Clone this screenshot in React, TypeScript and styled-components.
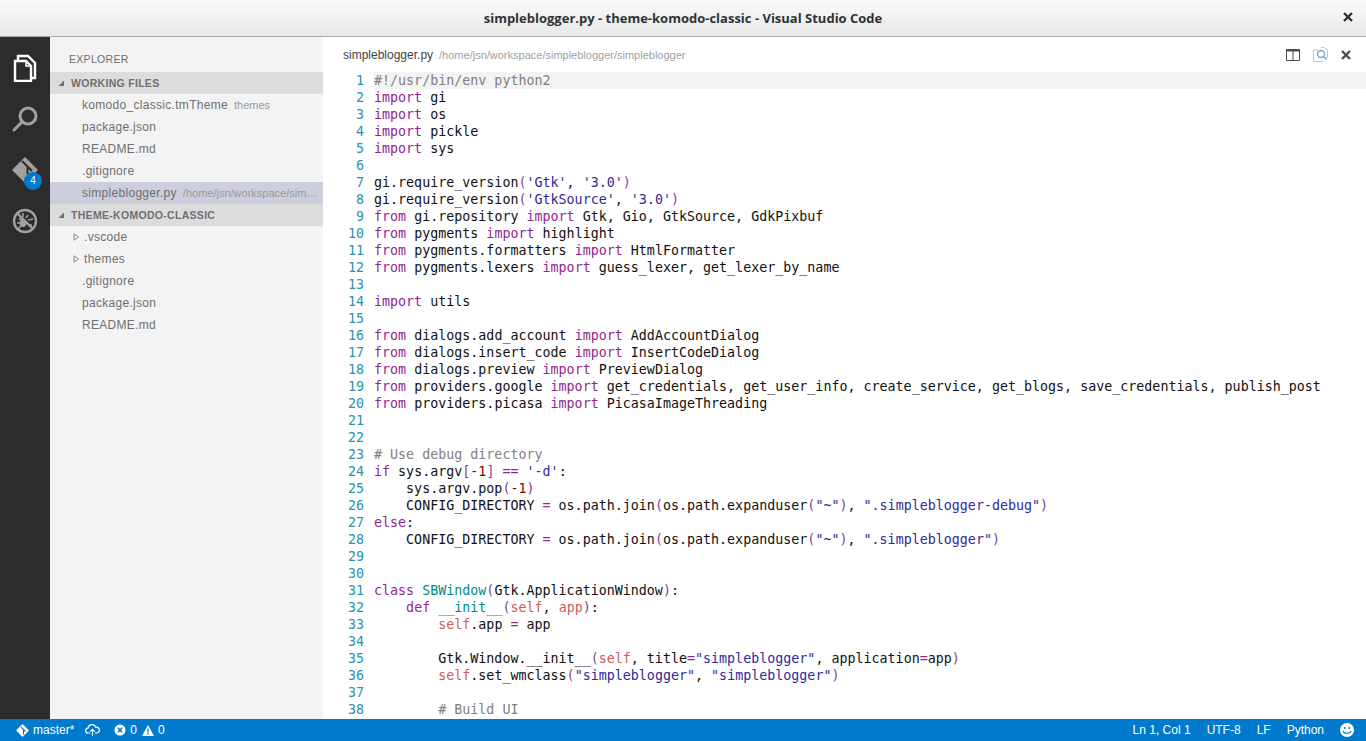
import React from 'react'
import styled, { createGlobalStyle } from 'styled-components'

const GlobalStyle = createGlobalStyle`
    html, body {
        margin: 0;
        padding: 0;
        height: 100%;
        overflow: hidden;
    }
    #root {
        height: 100%;
    }
`

const UI_FONT = `'Liberation Sans', Arial, sans-serif`

const Window = styled.div`
    display: flex;
    flex-direction: column;
    width: 1366px;
    height: 741px;
    background: #fff;
    font-family: ${UI_FONT};
`

const TitleBar = styled.div`
    position: relative;
    display: flex;
    align-items: center;
    justify-content: center;
    flex: 0 0 36px;
    border-bottom: 1px solid #a9a9a9;
    background: linear-gradient(#fafafa, #e8e8e8);
    color: #2e3436;
    font-family: 'Open Sans', sans-serif;
    font-weight: 700;
    font-size: 13px;
`

const WindowClose = styled.span`
    position: absolute;
    right: 13px;
    top: 12px;
    display: flex;
`

const Body = styled.div`
    display: flex;
    flex: 1;
    min-height: 0;
`

const ActivityBar = styled.nav`
    display: flex;
    flex-direction: column;
    align-items: center;
    flex: 0 0 50px;
    background: #2c2c2c;
    padding-top: 5px;
    box-sizing: border-box;
`

const ActivityItem = styled.div`
    position: relative;
    display: flex;
    align-items: center;
    justify-content: center;
    width: 50px;
    height: 51px;
`

const Badge = styled.span`
    position: absolute;
    left: 24px;
    top: 28px;
    width: 18px;
    height: 18px;
    border-radius: 50%;
    background: #007acc;
    color: #fff;
    font-size: 10px;
    line-height: 18px;
    text-align: center;
`

const SideBar = styled.aside`
    flex: 0 0 273px;
    background: #f3f3f3;
    color: #6f6f6f;
    font-size: 12px;
    letter-spacing: 0.3px;
    overflow: hidden;
`

const SideTitle = styled.div`
    height: 35px;
    line-height: 44px;
    padding-left: 19px;
    font-size: 10.5px;
`

const SectionHeader = styled.div`
    display: flex;
    align-items: center;
    height: 22px;
    background: #dcdcdc;
    font-size: 10.5px;
    font-weight: 700;
    padding-left: 7px;
    gap: 6px;
`

const Row = styled.div<{ $selected?: boolean }>`
    display: flex;
    align-items: center;
    height: 22px;
    padding-left: 32px;
    white-space: nowrap;
    background: ${p => (p.$selected ? '#cccedb' : 'transparent')};
`

const TreeRow = styled(Row)`
    padding-left: 22px;
    gap: 4px;
`

const Hint = styled.span`
    margin-left: 6px;
    font-size: 11px;
    color: #9a9a9a;
    letter-spacing: 0;
    overflow: hidden;
    text-overflow: ellipsis;
    padding-right: 5px;
`

const Editor = styled.main`
    display: flex;
    flex-direction: column;
    flex: 1;
    min-width: 0;
`

const EditorTitle = styled.div`
    display: flex;
    align-items: center;
    flex: 0 0 35px;
    padding-left: 20px;
    font-size: 12px;
    color: #444;
`

const EditorPath = styled.span`
    margin-left: 6px;
    font-size: 11px;
    color: #a0a0a0;
`

const EditorActions = styled.div`
    display: flex;
    align-items: center;
    gap: 13px;
    margin-left: auto;
    padding-right: 15px;
`

const Code = styled.div`
    flex: 1;
    overflow: hidden;
    font-family: 'DejaVu Sans Mono', monospace;
    font-size: 13.33px;
    line-height: 17px;
`

const CodeLine = styled.div`
    display: flex;
    height: 17px;
`

const LineNumber = styled.span`
    flex: 0 0 41px;
    text-align: right;
    color: #2b91af;
`

const LineText = styled.span<{ $current?: boolean }>`
    flex: 1;
    margin-left: 10px;
    white-space: pre;
    color: #111;
    background: ${p => (p.$current ? '#f3f3f3' : 'transparent')};
`

const TOKEN_COLOURS: Record<string, string> = {
    k: '#91278f',
    c: '#808080',
    s: '#2f2a9c',
    p: '#7f3f98',
    n: '#8b0000',
    t: '#008b8b',
    a: '#c8605c',
    o: '#91278f',
}

const Token = styled.span<{ $kind: string }>`
    color: ${p => TOKEN_COLOURS[p.$kind]};
`

const StatusBar = styled.footer`
    display: flex;
    align-items: center;
    flex: 0 0 22px;
    background: #007acc;
    color: #fff;
    font-size: 12px;
    padding: 0 12px 0 16px;
`

const StatusItem = styled.span<{ $gap?: number }>`
    display: flex;
    align-items: center;
    gap: 4px;
    margin-left: ${p => p.$gap ?? 0}px;
`

const StatusRight = styled.div`
    display: flex;
    align-items: center;
    margin-left: auto;
`

// "§k|import§" marks a token: k keyword, c comment, s string, p bracket, n number, t type, a argument
const SOURCE = [
    '§c|#!/usr/bin/env python2§',
    '§k|import§ gi',
    '§k|import§ os',
    '§k|import§ pickle',
    '§k|import§ sys',
    '',
    "gi.require_version§p|(§§s|'Gtk'§, §s|'3.0'§§p|)§",
    "gi.require_version§p|(§§s|'GtkSource'§, §s|'3.0'§§p|)§",
    '§k|from§ gi.repository §k|import§ Gtk, Gio, GtkSource, GdkPixbuf',
    '§k|from§ pygments §k|import§ highlight',
    '§k|from§ pygments.formatters §k|import§ HtmlFormatter',
    '§k|from§ pygments.lexers §k|import§ guess_lexer, get_lexer_by_name',
    '',
    '§k|import§ utils',
    '',
    '§k|from§ dialogs.add_account §k|import§ AddAccountDialog',
    '§k|from§ dialogs.insert_code §k|import§ InsertCodeDialog',
    '§k|from§ dialogs.preview §k|import§ PreviewDialog',
    '§k|from§ providers.google §k|import§ get_credentials, get_user_info, create_service, get_blogs, save_credentials, publish_post',
    '§k|from§ providers.picasa §k|import§ PicasaImageThreading',
    '',
    '',
    '§c|# Use debug directory§',
    "§k|if§ sys.argv§p|[§§n|-1§§p|]§ §o|==§ §s|'-d'§:",
    '    sys.argv.pop§p|(§§n|-1§§p|)§',
    '    CONFIG_DIRECTORY §o|=§ os.path.join§p|(§os.path.expanduser§p|(§§s|"~"§§p|)§, §s|".simpleblogger-debug"§§p|)§',
    '§k|else§:',
    '    CONFIG_DIRECTORY §o|=§ os.path.join§p|(§os.path.expanduser§p|(§§s|"~"§§p|)§, §s|".simpleblogger"§§p|)§',
    '',
    '',
    '§k|class§ §t|SBWindow§§p|(§Gtk.ApplicationWindow§p|)§:',
    '    §k|def§ §t|__init__§§p|(§§a|self§, §a|app§§p|)§:',
    '        §a|self§.app §o|=§ app',
    '',
    '        Gtk.Window.__init__§p|(§§a|self§, title§o|=§§s|"simpleblogger"§, application§o|=§app§p|)§',
    '        §a|self§.set_wmclass§p|(§§s|"simpleblogger"§, §s|"simpleblogger"§§p|)§',
    '',
    '        §c|# Build UI§',
]

const renderLine = (src: string) =>
    src.split('§').map((part, i) => {
        const m = part.match(/^([kcspntao])\|(.*)$/)
        return m ? <Token key={i} $kind={m[1]}>{m[2]}</Token> : <span key={i}>{part}</span>
    })

const FilesIcon = () => (
    <svg width="24" height="28" viewBox="0 0 24 28" fill="none" stroke="#fff" strokeWidth="2.4">
        <path d="M5 6.5V2h10l7 7v15h-3.5" />
        <path d="M2 7h11l5 5v15H2z" />
        <path d="M13 7v5h5" strokeWidth="1.6" />
    </svg>
)

const SearchIcon = () => (
    <svg width="26" height="26" viewBox="0 0 26 26" fill="none" stroke="#a0a0a0" strokeWidth="3">
        <circle cx="16" cy="10" r="8" />
        <path d="M10 16L2 24" strokeLinecap="round" />
    </svg>
)

const GitIcon = () => (
    <svg width="26" height="26" viewBox="0 0 26 26">
        <path d="M13 0L26 13 13 26 0 13z" fill="#a0a0a0" />
        <path d="M10 4l5.5 5.5M15.5 9.5V17M15.5 9.5L20 14" stroke="#2c2c2c" strokeWidth="2" fill="none" />
    </svg>
)

const DebugIcon = () => (
    <svg width="26" height="26" viewBox="0 0 26 26" fill="none" stroke="#a0a0a0">
        <circle cx="13" cy="13" r="11" strokeWidth="2.4" />
        <path d="M5 5l16 16" strokeWidth="2.4" />
        <ellipse cx="11" cy="15" rx="3.5" ry="4" fill="#a0a0a0" stroke="none" />
        <path d="M7 10l2 2M5 15h3M6 21l3-3M11 5v4M16 7l-2 3M21 11l-5 1M20 17h-3" strokeWidth="1.6" />
    </svg>
)

const Triangle = ({ open }: { open?: boolean }) => (
    <svg width="8" height="8" viewBox="0 0 8 8">
        {open ? (
            <path d="M7 1.5V7H1.5z" fill="#6f6f6f" />
        ) : (
            <path d="M2 .8L6.5 4 2 7.2z" fill="none" stroke="#8a8a8a" />
        )}
    </svg>
)

const CloseIcon = ({ colour }: { colour: string }) => (
    <svg width="10" height="10" viewBox="0 0 10 10" stroke={colour} strokeWidth="2.4">
        <path d="M1 1l8 8M9 1l-8 8" />
    </svg>
)

const SplitIcon = () => (
    <svg width="14" height="12" viewBox="0 0 14 12" fill="none" stroke="#4b4b4b">
        <path d="M.5.5h13v11H.5zM7 .5v11" />
        <path d="M.5 1.5h13" strokeWidth="2" />
    </svg>
)

const ChangesIcon = () => (
    <svg width="15" height="15" viewBox="0 0 15 15" fill="none">
        <path d="M5 3H.5v11.5h9V13M8 .5h3.5l3 3v7H13" stroke="#c5c5c5" />
        <circle cx="8" cy="7" r="3.5" stroke="#7aa7d0" strokeWidth="1.4" />
        <path d="M10.5 9.5l3 3" stroke="#7aa7d0" strokeWidth="1.6" />
    </svg>
)

const BranchIcon = () => (
    <svg width="13" height="13" viewBox="0 0 13 13">
        <path d="M6.5 0L13 6.5 6.5 13 0 6.5z" fill="#fff" />
        <path d="M5 3l2.5 2.5v5M7.5 5.5l2 2" stroke="#007acc" strokeWidth="1.1" fill="none" />
    </svg>
)

const CloudIcon = () => (
    <svg width="15" height="12" viewBox="0 0 15 12" fill="none" stroke="#fff" strokeWidth="1.2">
        <path d="M5 9H3.2a2.4 2.4 0 0 1-.2-4.8A4 4 0 0 1 10.7 3.2 2.9 2.9 0 0 1 12 9h-2" />
        <path d="M7.5 12V5.5M5.2 7.6l2.3-2.3 2.3 2.3" />
    </svg>
)

const ErrorIcon = () => (
    <svg width="12" height="12" viewBox="0 0 12 12">
        <circle cx="6" cy="6" r="5.5" fill="#fff" />
        <path d="M3.8 3.8l4.4 4.4M8.2 3.8l-4.4 4.4" stroke="#007acc" strokeWidth="1.6" />
    </svg>
)

const WarningIcon = () => (
    <svg width="12" height="11" viewBox="0 0 12 11">
        <path d="M6 0l6 11H0z" fill="#fff" />
        <path d="M6 3.5v4M6 8.2v1.5" stroke="#007acc" strokeWidth="1.3" />
    </svg>
)

const SmileIcon = () => (
    <svg width="14" height="14" viewBox="0 0 14 14">
        <circle cx="7" cy="7" r="7" fill="#fff" />
        <circle cx="4.8" cy="5" r="1" fill="#007acc" />
        <circle cx="9.2" cy="5" r="1" fill="#007acc" />
        <path d="M3 8c1 3 7 3 8 0" stroke="#007acc" strokeWidth="1.1" fill="none" />
    </svg>
)

const App: React.FC = () => {
    return (
        <Window>
            <GlobalStyle />
            <TitleBar>
                simpleblogger.py - theme-komodo-classic - Visual Studio Code
                <WindowClose><CloseIcon colour="#2e3436" /></WindowClose>
            </TitleBar>
            <Body>
                <ActivityBar>
                    <ActivityItem><FilesIcon /></ActivityItem>
                    <ActivityItem><SearchIcon /></ActivityItem>
                    <ActivityItem><GitIcon /><Badge>4</Badge></ActivityItem>
                    <ActivityItem><DebugIcon /></ActivityItem>
                </ActivityBar>
                <SideBar>
                    <SideTitle>EXPLORER</SideTitle>
                    <SectionHeader><Triangle open />WORKING FILES</SectionHeader>
                    <Row>komodo_classic.tmTheme<Hint>themes</Hint></Row>
                    <Row>package.json</Row>
                    <Row>README.md</Row>
                    <Row>.gitignore</Row>
                    <Row $selected>simpleblogger.py<Hint>/home/jsn/workspace/simpleblogger/simpleblogger</Hint></Row>
                    <SectionHeader><Triangle open />THEME-KOMODO-CLASSIC</SectionHeader>
                    <TreeRow><Triangle />.vscode</TreeRow>
                    <TreeRow><Triangle />themes</TreeRow>
                    <Row>.gitignore</Row>
                    <Row>package.json</Row>
                    <Row>README.md</Row>
                </SideBar>
                <Editor>
                    <EditorTitle>
                        simpleblogger.py
                        <EditorPath>/home/jsn/workspace/simpleblogger/simpleblogger</EditorPath>
                        <EditorActions>
                            <SplitIcon />
                            <ChangesIcon />
                            <CloseIcon colour="#4b4b4b" />
                        </EditorActions>
                    </EditorTitle>
                    <Code>
                        {SOURCE.map((line, i) => (
                            <CodeLine key={i}>
                                <LineNumber>{i + 1}</LineNumber>
                                <LineText $current={i === 0}>{renderLine(line)}</LineText>
                            </CodeLine>
                        ))}
                    </Code>
                </Editor>
            </Body>
            <StatusBar>
                <StatusItem><BranchIcon />master*</StatusItem>
                <StatusItem $gap={11}><CloudIcon /></StatusItem>
                <StatusItem $gap={14}><ErrorIcon />0</StatusItem>
                <StatusItem $gap={5}><WarningIcon />0</StatusItem>
                <StatusRight>
                    <StatusItem>Ln 1, Col 1</StatusItem>
                    <StatusItem $gap={16}>UTF-8</StatusItem>
                    <StatusItem $gap={16}>LF</StatusItem>
                    <StatusItem $gap={16}>Python</StatusItem>
                    <StatusItem $gap={16}><SmileIcon /></StatusItem>
                </StatusRight>
            </StatusBar>
        </Window>
    )
}

export default App
